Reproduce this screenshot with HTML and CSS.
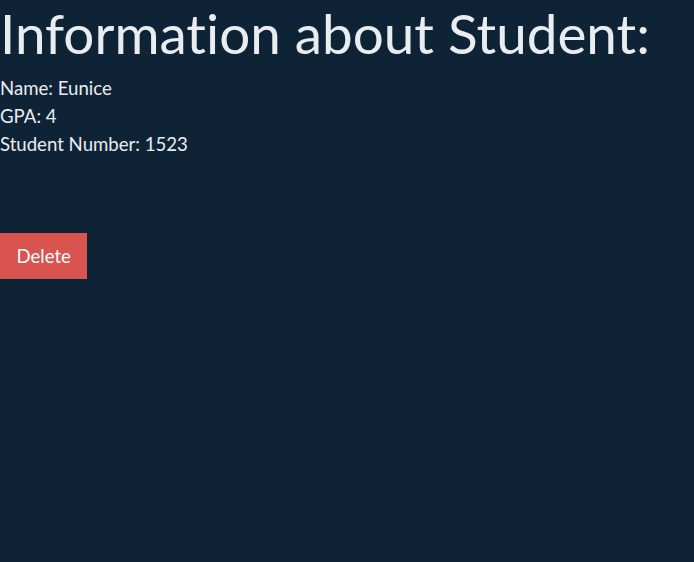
FILE: index.html
```html
<!DOCTYPE html>
<html>
<head>
<meta charset="utf-8">
<link rel="stylesheet" href="styles.css">
</head>
<body>
<div class="page">
  <h1 class="title">Information about Student:</h1>
  <div class="info">
    <div class="line">Name: Eunice</div>
    <div class="line">GPA: 4</div>
    <div class="line">Student Number: 1523</div>
  </div>
  <button class="delete">Delete</button>
</div>
</body>
</html>
```
FILE: styles.css
```css
html, body {
  margin: 0;
  padding: 0;
  background: #0f2337;
  height: 100%;
}
.page {
  font-family: Lato, "Noto Sans", sans-serif;
  color: #e9edf0;
  font-variant-ligatures: none;
}
.title {
  font-weight: 400;
  font-size: 54.8px;
  line-height: 64px;
  margin: 1px 0 9px 0;
}
.info {
  font-size: 18.6px;
  line-height: 28px;
}
.delete {
  display: block;
  margin-top: 75px;
  background: #d9534f;
  color: #fff;
  border: none;
  font-family: Lato, sans-serif;
  font-variant-ligatures: none;
  font-size: 18.6px;
  height: 46px;
  padding: 0 16.5px;
}
```
